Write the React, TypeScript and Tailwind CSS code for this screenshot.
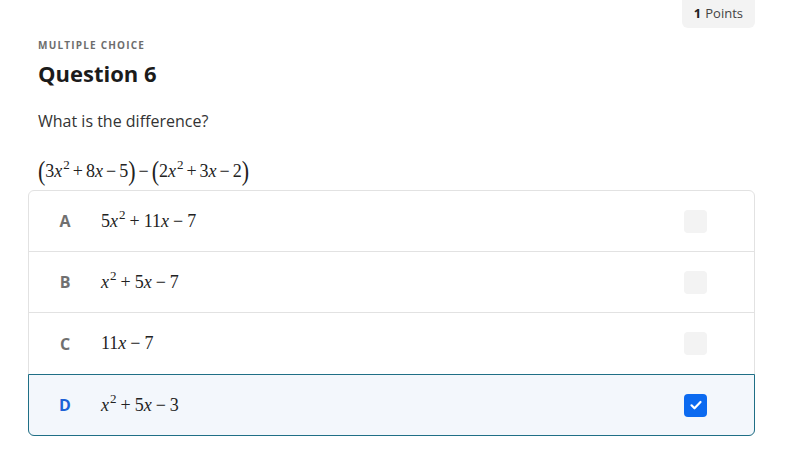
import React from 'react';

const serif = { fontFamily: '"Liberation Serif", "Times New Roman", serif' };

function X() {
  return <i className="italic">x</i>;
}

function Sq() {
  return <span className="text-[13px] relative -top-[7px] ml-[1px] leading-none">2</span>;
}

const M = ({ children }: { children: React.ReactNode }) => <span className="mx-[4px]">{children}</span>;
const S = ({ children }: { children: React.ReactNode }) => <span className="mx-[3px]">{children}</span>;

const Paren = ({ c }: { c: string }) => <span className="text-[22px] leading-none scale-y-125 inline-block">{c}</span>;

const options: { key: string; expr: React.ReactNode; selected?: boolean }[] = [
  {
    key: 'A',
    expr: (
      <>
        5<X />
        <Sq />
        <M>+</M>11<X />
        <M>−</M>7
      </>
    ),
  },
  {
    key: 'B',
    expr: (
      <>
        <X />
        <Sq />
        <M>+</M>5<X />
        <M>−</M>7
      </>
    ),
  },
  {
    key: 'C',
    expr: (
      <>
        11<X />
        <M>−</M>7
      </>
    ),
  },
  {
    key: 'D',
    expr: (
      <>
        <X />
        <Sq />
        <M>+</M>5<X />
        <M>−</M>3
      </>
    ),
    selected: true,
  },
];

export default function App() {
  return (
    <div
      className="w-[795px] h-[476px] bg-white text-[#333] relative"
      style={{ fontFamily: '"Open Sans", "Noto Sans", sans-serif' }}
    >
      <div className="flex justify-end pr-[40px]">
        <div className="h-[28px] px-[12px] flex items-center gap-[4px] bg-[#f3f3f3] rounded-b-[6px] text-[13px] text-[#444]">
          <span className="font-bold text-[#222]">1</span>
          <span>Points</span>
        </div>
      </div>

      <div className="pl-[38px] pt-[10px]">
        <div className="text-[10px] font-bold tracking-[0.12em] text-[#6d6d6d] leading-[14px]">MULTIPLE CHOICE</div>
        <h1 className="mt-[6px] text-[22px] font-bold text-[#1b1b1b] leading-[30px]">Question 6</h1>
        <p className="mt-[22px] text-[16px] text-[#333] leading-[22px]">What is the difference?</p>
        <div className="mt-[26px] text-[18px] text-[#222] leading-[26px] flex items-center" style={serif}>
          <Paren c="(" />3<X />
          <Sq />
          <S>+</S>8<X />
          <S>−</S>5<Paren c=")" />
          <S>−</S>
          <Paren c="(" />2<X />
          <Sq />
          <S>+</S>3<X />
          <S>−</S>2<Paren c=")" />
        </div>
      </div>

      <div className="ml-[28px] mr-[40px] mt-[6px] border border-[#e2e2e2] rounded-[6px] flex flex-col">
        {options.map((o, i) => (
          <div
            key={o.key}
            className={
              o.selected
                ? 'h-[62px] -mx-px -mb-px flex items-center bg-[#f3f7fc] border border-[#1f6f86] rounded-b-[6px]'
                : 'h-[61px] flex items-center border-b border-[#e2e2e2]' + (i === 2 ? ' border-b-0' : '')
            }
          >
            <div
              className={
                'w-[72px] text-center text-[16px] font-bold ' + (o.selected ? 'text-[#1d62d6]' : 'text-[#707070]')
              }
            >
              {o.key}
            </div>
            <div className="flex-1 text-[18px] text-[#222] flex items-center" style={serif}>
              {o.expr}
            </div>
            <div className="mr-[47px]">
              {o.selected ? (
                <div className="w-[23px] h-[23px] rounded-[4px] bg-[#0b6af0] flex items-center justify-center">
                  <svg width="14" height="14" viewBox="0 0 14 14" fill="none">
                    <path d="M2.5 7.3l3 3 6-6.3" stroke="white" strokeWidth="2.2" strokeLinecap="round" strokeLinejoin="round" />
                  </svg>
                </div>
              ) : (
                <div className="w-[23px] h-[23px] rounded-[4px] bg-[#f3f3f3]" />
              )}
            </div>
          </div>
        ))}
      </div>
    </div>
  );
}
